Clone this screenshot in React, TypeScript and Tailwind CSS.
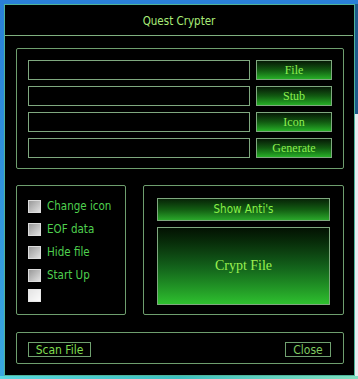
import React from "react";

const sans = { fontFamily: '"DejaVu Sans Condensed", Roboto, "Liberation Sans", sans-serif' };
const serif = { fontFamily: '"Liberation Serif", "DejaVu Serif", serif' };

function GreenButton({ label }: { label: string }) {
  return (
    <div
      className="w-[76px] h-[20px] shrink-0 border border-[#7fa87f] bg-gradient-to-b from-[#061a06] via-[#115a11] to-[#27b027] flex items-center justify-center text-[12px] text-[#8cf050] leading-none"
      style={serif}
    >
      {label}
    </div>
  );
}

function Field() {
  return <div className="w-[222px] h-[20px] shrink-0 border border-[#7fa87f] bg-black" />;
}

function Check({ label, light }: { label?: string; light?: boolean }) {
  return (
    <div className="flex items-center h-[13px] shrink-0">
      <div
        className={
          light
            ? "w-[13px] h-[13px] border border-[#e8e8e8] bg-gradient-to-br from-[#e4e4e4] to-[#fafafa]"
            : "w-[13px] h-[13px] border border-[#dcdcdc] bg-gradient-to-br from-[#9a9a9a] to-[#e0e0e0]"
        }
      />
      {label && (
        <span className="ml-[6px] text-[11.5px] text-[#4fd04f] leading-none" style={sans}>
          {label}
        </span>
      )}
    </div>
  );
}

export default function App() {
  return (
    <div className="w-[358px] h-[379px] flex flex-col bg-[#1f7fd6] overflow-hidden">
      <div className="flex h-[376px] shrink-0">
        <div className="w-[4px] shrink-0 bg-gradient-to-b from-[#2a7fd8] to-[#3aa8e0]" />
        <div className="w-[351px] shrink-0 flex flex-col">
          <div className="h-[4px] shrink-0 bg-[#2a80d8]" />
          <div className="h-[372px] shrink-0 bg-black border border-[#4fb49a] flex flex-col">
            <div className="h-[31px] shrink-0 border-b border-[#7fb07f] flex items-center justify-center mr-[1px] pt-[4px]">
              <span className="text-[11.5px] text-[#a8ec78] leading-none" style={sans}>
                Quest Crypter
              </span>
            </div>
            <div className="shrink-0 ml-[11px] mr-[10px] mt-[12px] border border-[#6e9e6e] rounded-[2px] pl-[11px] pt-[11px] pb-[10px] flex flex-col gap-[6px]">
              {["File", "Stub", "Icon", "Generate"].map((l) => (
                <div key={l} className="flex gap-[6px]">
                  <Field />
                  <GreenButton label={l} />
                </div>
              ))}
            </div>
            <div className="shrink-0 ml-[11px] mr-[10px] mt-[16px] flex gap-[17px]">
              <div className="w-[110px] h-[130px] border border-[#6e9e6e] rounded-[2px] pl-[11px] pt-[14px] flex flex-col">
                <Check label="Change icon" />
                <div className="h-[10px] shrink-0" />
                <Check label="EOF data" />
                <div className="h-[10px] shrink-0" />
                <Check label="Hide file" />
                <div className="h-[10px] shrink-0" />
                <Check label="Start Up" />
                <div className="h-[7px] shrink-0" />
                <Check light />
              </div>
              <div className="flex-1 h-[130px] border border-[#6e9e6e] rounded-[2px] px-[13px] pt-[12px] flex flex-col gap-[6px]">
                <div
                  className="h-[23px] shrink-0 border border-[#7fa87f] bg-gradient-to-b from-[#072407] via-[#125c12] to-[#2aa82a] flex items-center justify-center text-[11.5px] text-[#88f048] leading-none"
                  style={sans}
                >
                  Show Anti's
                </div>
                <div
                  className="h-[78px] shrink-0 border border-[#7fa87f] bg-gradient-to-b from-[#031203] via-[#12601a] to-[#2ec02e] flex items-center justify-center text-[14px] text-[#9af050] leading-none"
                  style={serif}
                >
                  Crypt File
                </div>
              </div>
            </div>
            <div className="shrink-0 ml-[11px] mr-[10px] mt-[17px] h-[32px] border border-[#6e9e6e] rounded-[2px] pl-[11px] pr-[12px] pt-[9px] flex justify-between items-start">
              <div
                className="w-[63px] h-[15px] border border-[#6fa06f] flex items-center justify-center text-[12px] text-[#7fdc50] leading-none"
                style={sans}
              >
                Scan File
              </div>
              <div
                className="w-[46px] h-[15px] border border-[#6fa06f] flex items-center justify-center text-[12px] text-[#7fc860] leading-none"
                style={sans}
              >
                Close
              </div>
            </div>
          </div>
        </div>
        <div className="w-[3px] shrink-0 flex flex-col bg-[#dfeaf0]">
          <div className="h-[4px] shrink-0 bg-[#2a80d8]" />
          <div className="h-[110px] shrink-0 bg-[#1e5a8a]" />
          <div className="flex-1 bg-[#e6ecef]" />
        </div>
      </div>
      <div className="flex-1 bg-gradient-to-r from-[#5ad8e0] via-[#3cc0c0] to-[#80e0c0]" />
    </div>
  );
}
